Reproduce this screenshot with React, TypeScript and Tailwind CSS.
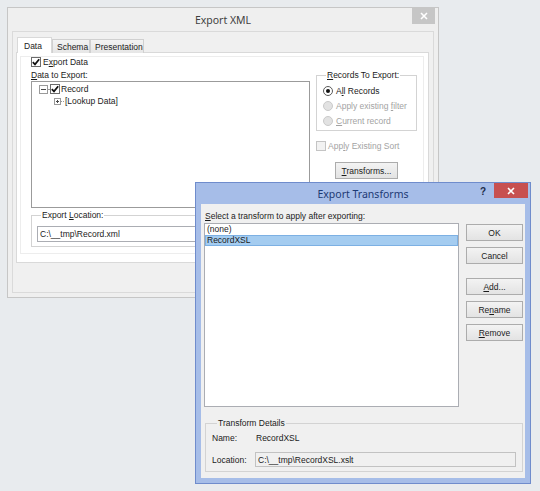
import type { ReactNode } from "react";
import clsx from "clsx";

const ui = "font-['Liberation_Sans',Arial,sans-serif] text-[8.5px] leading-[10px] text-[#1b1b1b]";
const titleFont = "font-['Noto_Sans','Open_Sans',sans-serif] text-[10.5px] leading-[14px]";

function Key({ children }: { children: ReactNode }) {
  return <span className="underline decoration-1 underline-offset-1">{children}</span>;
}

function CheckBox({ checked = false, disabled = false }: { checked?: boolean; disabled?: boolean }) {
  return (
    <span
      className={clsx(
        "flex h-[10px] w-[10px] shrink-0 items-center justify-center border",
        disabled ? "border-[#c4c4c4] bg-[#f2f2f2]" : "border-[#6c6c6c] bg-white"
      )}
    >
      {checked && (
        <svg width="8" height="8" viewBox="0 0 8 8">
          <path d="M0.8 4.1 L3 6.4 L7.2 1.2" fill="none" stroke="#111" strokeWidth="1.7" />
        </svg>
      )}
    </span>
  );
}

function Radio({ checked = false, disabled = false }: { checked?: boolean; disabled?: boolean }) {
  return (
    <span
      className={clsx(
        "flex h-[10px] w-[10px] shrink-0 items-center justify-center rounded-full border",
        disabled ? "border-[#cacaca] bg-[#e2e2e2]" : "border-[#5a5a5a] bg-white"
      )}
    >
      {checked && <span className="h-[4px] w-[4px] rounded-full bg-[#111]" />}
    </span>
  );
}

function Btn({ children, className }: { children: ReactNode; className?: string }) {
  return (
    <div
      className={clsx(
        "flex h-[17px] shrink-0 items-center justify-center border border-[#acacac] bg-linear-to-b from-[#f3f3f3] to-[#e3e3e3]",
        className
      )}
    >
      {children}
    </div>
  );
}

function Group({ label, className, children }: { label: ReactNode; className?: string; children: ReactNode }) {
  return (
    <fieldset className={clsx("border border-[#d3d3d3]", className)}>
      <legend className="px-[1px] leading-[10px]">{label}</legend>
      {children}
    </fieldset>
  );
}

function Expander({ open, size = 9 }: { open: boolean; size?: number }) {
  const m = size / 2;
  return (
    <svg width={size} height={size} viewBox={`0 0 ${size} ${size}`} className="shrink-0">
      <rect x="0.5" y="0.5" width={size - 1} height={size - 1} fill="white" stroke="#9a9a9a" />
      <path d={`M2 ${m}H${size - 2}`} stroke="#4a4a4a" />
      {!open && <path d={`M${m} 2V${size - 2}`} stroke="#4a4a4a" />}
    </svg>
  );
}

function CloseGlyph() {
  return (
    <svg width="8" height="8" viewBox="0 0 8 8">
      <path d="M1 1L7 7M7 1L1 7" stroke="white" strokeWidth="1.6" />
    </svg>
  );
}

function ExportXml() {
  return (
    <div className="absolute left-[7px] top-[7px] flex h-[291px] w-[432px] flex-col border border-[#c6c6c6] bg-[#efefef]">
      <div className="relative flex h-[23px] shrink-0 items-center justify-center">
        <span className={clsx(titleFont, "text-[#3f3f3f]")}>Export XML</span>
        <div className="absolute right-[3px] top-0 flex h-[16px] w-[23px] items-center justify-center bg-[#c6c6c6]">
          <CloseGlyph />
        </div>
      </div>

      <div className="mx-[4px] mb-[4px] flex-1 border border-[#dadada] bg-[#f0f0f0] pl-[3px] pt-[5px]">
        {/* tab strip */}
        <div className="flex h-[16px] items-end pl-[1px]">
          <div className="relative z-10 flex h-[16px] w-[35px] items-center border-l border-r border-t border-[#d9d9d9] bg-white pl-[6px]">
            Data
          </div>
          <div className="flex h-[14px] w-[38px] items-center border-l border-r border-t border-[#d0d0d0] bg-linear-to-b from-[#f3f3f3] to-[#e6e6e6] pl-[4px]">
            Schema
          </div>
          <div className="flex h-[14px] w-[54px] items-center border-l border-r border-t border-[#d0d0d0] bg-linear-to-b from-[#f3f3f3] to-[#e6e6e6] pl-[4px]">
            Presentation
          </div>
        </div>

        {/* Data tab page */}
        <div className="-mt-[1px] h-[211px] w-[413px] border border-[#d9d9d9] bg-white">
          <div className="ml-[3px] mt-[3px] h-[198px] w-[404px] border border-[#ededed] pl-[10px]">
            <div className="flex items-start">
              <div className="flex w-[279px] flex-col">
                <div className="flex h-[10px] items-center gap-[2px]">
                  <CheckBox checked />
                  <span>
                    E<Key>x</Key>port Data
                  </span>
                </div>
                <div className="mt-[3px] h-[10px]">
                  <Key>D</Key>ata to Export:
                </div>
                <div className="mt-[1px] h-[127px] w-[279px] border border-[#9b9b9b] bg-white">
                  <div className="mt-[1px] flex h-[12px] items-center pl-[7px]">
                    <Expander open />
                    <span className="w-[2px] shrink-0 border-t border-dotted border-[#999]" />
                    <CheckBox checked />
                    <span className="ml-[1px]">Record</span>
                  </div>
                  <div className="flex h-[12px] items-center pl-[22px]">
                    <Expander open={false} size={7} />
                    <span className="w-[3px] shrink-0 border-t border-dotted border-[#999]" />
                    <span className="ml-[1px]">[Lookup Data]</span>
                  </div>
                </div>
              </div>

              <div className="ml-[6px] flex w-[101px] flex-col">
                <Group
                  className="mt-[13px] pb-[2px] pl-[6px] pt-[3px] [&>legend]:ml-[3px]"
                  label={
                    <>
                      <Key>R</Key>ecords To Export:
                    </>
                  }
                >
                  <div className="flex h-[15px] items-center gap-[3px]">
                    <Radio checked />
                    <span>
                      A<Key>l</Key>l Records
                    </span>
                  </div>
                  <div className="flex h-[15px] items-center gap-[3px] text-[#a3a3a3]">
                    <Radio disabled />
                    <span>
                      Apply existing <Key>f</Key>ilter
                    </span>
                  </div>
                  <div className="flex h-[15px] items-center gap-[3px] text-[#a3a3a3]">
                    <Radio disabled />
                    <span>
                      <Key>C</Key>urrent record
                    </span>
                  </div>
                </Group>
                <div className="mt-[10px] flex h-[10px] items-center gap-[2px] text-[#a3a3a3]">
                  <CheckBox disabled />
                  <span>
                    App<Key>l</Key>y Existing Sort
                  </span>
                </div>
                <Btn className="mx-auto mt-[11px] w-[63px]">
                  <span>
                    <Key>T</Key>ransforms...
                  </span>
                </Btn>
              </div>
            </div>

            <Group
              className="mt-[2px] w-[386px] pb-[4px] pl-[5px] pt-[6px] [&>legend]:ml-[4px]"
              label={
                <>
                  Export <Key>L</Key>ocation:
                </>
              }
            >
              <div className="flex h-[16px] w-[340px] items-center border border-[#abadb3] bg-white pl-[2px]">
                {"C:\\__tmp\\Record.xml"}
              </div>
            </Group>
          </div>
        </div>
      </div>
    </div>
  );
}

function ExportTransforms() {
  return (
    <div className="absolute left-[195px] top-[182px] flex h-[302px] w-[336px] flex-col border border-[#6f8ccc] bg-[#a6bde8]">
      <div className="relative flex h-[21px] shrink-0 items-center justify-center">
        <span className={clsx(titleFont, "text-[#1d3a74]")}>Export Transforms</span>
        <span className="absolute right-[44px] top-[3px] text-[10px] font-bold leading-[12px] text-[#1d2c4a]">?</span>
        <div className="absolute right-[2px] top-0 flex h-[15px] w-[34px] items-center justify-center bg-[#c75050]">
          <CloseGlyph />
        </div>
      </div>

      <div className="mx-[5px] mb-[5px] flex-1 bg-[#f0f0f0]">
        <div className="h-[10px] pl-[4px] mt-[7px]">
          <Key>S</Key>elect a transform to apply after exporting:
        </div>
        <div className="mt-[2px] flex items-start">
          <div className="ml-[3px] h-[184px] w-[255px] border border-[#abadb3] bg-white">
            <div className="h-[11px] pl-[2px] leading-[11px]">(none)</div>
            <div className="h-[11px] border border-[#7cb0e3] bg-[#a4ccf0] pl-[1px] leading-[9px]">RecordXSL</div>
          </div>
          <div className="ml-[7px] mt-[1px] flex w-[57px] flex-col">
            <Btn className="border-[#8f9aa8]">OK</Btn>
            <Btn className="mt-[6px]">Cancel</Btn>
            <Btn className="mt-[14px]">
              <span>
                <Key>A</Key>dd...
              </span>
            </Btn>
            <Btn className="mt-[6px]">
              <span>
                Re<Key>n</Key>ame
              </span>
            </Btn>
            <Btn className="mt-[6px]">
              <span>
                <Key>R</Key>emove
              </span>
            </Btn>
          </div>
        </div>

        <Group className="ml-[4px] mt-[11px] w-[318px] pb-[4px] pl-[6px] [&>legend]:ml-[5px]" label="Transform Details">
          <div className="mt-[5px] flex h-[10px] items-center">
            <span className="w-[44px]">Name:</span>
            <span>RecordXSL</span>
          </div>
          <div className="mt-[9px] flex h-[15px] items-center">
            <span className="w-[43px]">Location:</span>
            <div className="flex h-[15px] w-[261px] items-center border border-[#c2c2c2] bg-[#f0f0f0] pl-[2px]">
              {"C:\\__tmp\\RecordXSL.xslt"}
            </div>
          </div>
        </Group>
      </div>
    </div>
  );
}

export default function App() {
  return (
    <div className={clsx("relative h-[491px] w-[540px] overflow-hidden bg-[#e8ebee]", ui)}>
      <ExportXml />
      <ExportTransforms />
    </div>
  );
}
